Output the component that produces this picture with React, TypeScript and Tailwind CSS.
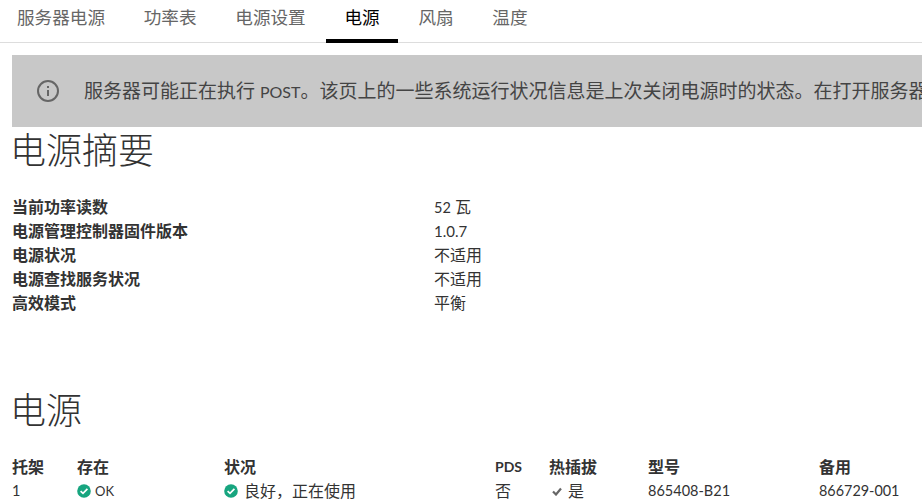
const font = "font-['Lato','Noto_Sans_CJK_SC',sans-serif]";

const tabs = ["服务器电源", "功率表", "电源设置", "电源", "风扇", "温度"];

const summary = [
  ["当前功率读数", <><span className="text-[14.5px]">52</span> 瓦</>],
  ["电源管理控制器固件版本", <span className="text-[15px]">1.0.7</span>],
  ["电源状况", "不适用"],
  ["电源查找服务状况", "不适用"],
  ["高效模式", "平衡"],
] as const;

function OkIcon() {
  return (
    <svg width="14" height="14" viewBox="0 0 14 14" className="shrink-0">
      <circle cx="7" cy="7" r="6.8" fill="#17a57f" />
      <path d="M3.6 7.1 L6 9.4 L10.4 4.9" fill="none" stroke="#fff" strokeWidth="1.7" />
    </svg>
  );
}

export default function App() {
  return (
    <div className={`${font} w-[922px] h-[503px] overflow-hidden bg-white text-[#333] text-[16px]`}>
      <nav className="flex gap-[2.75px] h-[43px] border-b border-[#dddddd]">
        {tabs.map((t, i) => (
          <div
            key={t}
            className={`px-[18px] h-[43px] leading-[36px] text-[17.6px] ${i === 0 ? "-ml-px" : ""} ${
              t === "电源" ? "text-black border-b-4 border-black" : "text-[#666]"
            }`}
          >
            {t}
          </div>
        ))}
      </nav>

      <div className="ml-3 mt-3 h-[72px] w-[1400px] bg-[#c8c8c8] flex items-center pl-6 text-[19px] text-[#444] whitespace-nowrap">
        <svg width="24" height="24" viewBox="0 0 24 24" fill="none" stroke="#666" strokeWidth="2" className="shrink-0">
          <circle cx="12" cy="12" r="10" />
          <path d="M12 11v6M12 7v2" />
        </svg>
        <span className="ml-6">服务器可能正在执行 <span className="text-[16px]">POST</span>。该页上的一些系统运行状况信息是上次关闭电源时的状态。在打开服务器电源并完成 POST 后，信息将会更新。</span>
      </div>

      <h1 className="ml-[10px] text-[36px] leading-[46px] font-light text-[#333]">电源摘要</h1>

      <div className="ml-3 mt-[22px]">
        {summary.map(([k, v]) => (
          <div key={k} className="flex h-6 leading-6">
            <div className="w-[422px] font-bold">{k}</div>
            <div>{v}</div>
          </div>
        ))}
      </div>

      <h2 className="ml-[10px] mt-[72px] text-[36px] leading-[46px] font-light text-[#333]">电源</h2>

      <div className="ml-3 mt-[22px] grid grid-cols-[65px_147px_271px_54px_99px_171px_1fr] leading-6">
        <div className="font-bold">托架</div>
        <div className="font-bold">存在</div>
        <div className="font-bold">状况</div>
        <div className="font-bold text-[14px]">PDS</div>
        <div className="font-bold">热插拔</div>
        <div className="font-bold">型号</div>
        <div className="font-bold">备用</div>

        <div className="text-[14.5px]">1</div>
        <div className="flex items-center gap-1 text-[13px]"><OkIcon />OK</div>
        <div className="flex items-center gap-[6px]"><OkIcon />良好，正在使用</div>
        <div>否</div>
        <div className="flex items-center gap-[6px] pl-[3px]">
          <svg width="10" height="10" viewBox="0 0 10 10" className="shrink-0">
            <path d="M1 5.5 L4 8.5 L9 2.5" fill="none" stroke="#666" strokeWidth="2.2" />
          </svg>
          是
        </div>
        <div className="text-[14.5px]">865408-B21</div>
        <div className="text-[14.4px]">866729-001</div>
      </div>
    </div>
  );
}
